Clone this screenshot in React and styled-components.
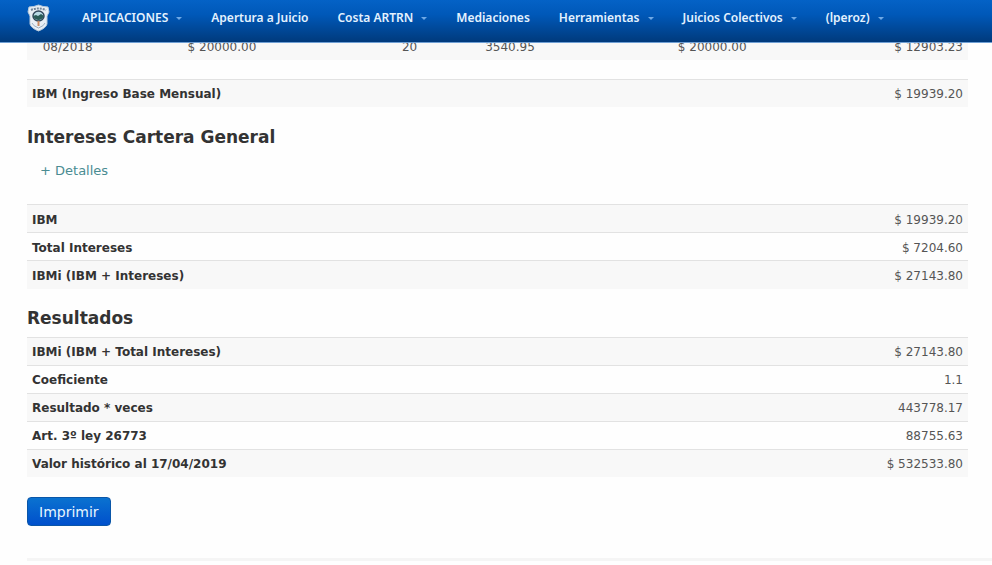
import React from "react";
import styled, { createGlobalStyle } from "styled-components";

const GlobalStyle = createGlobalStyle`
  * { box-sizing: border-box; }
  body {
    margin: 0;
    background: #fefefe;
    color: #555;
    font-family: "DejaVu Sans", Verdana, sans-serif;
    font-size: 12px;
    line-height: 18px;
  }
`;

const NavBar = styled.header`
  position: fixed;
  top: 0;
  left: 0;
  right: 0;
  z-index: 10;
  display: flex;
  align-items: center;
  height: 43px;
  padding: 0 27px 6px;
  background: linear-gradient(to bottom, #0462c6 0%, #0058b8 35%, #003a7c 100%);
  border-bottom: 1px solid #6f9fd4;
`;

const Brand = styled.a`
  display: flex;
  margin-right: 18px;
`;

const NavList = styled.ul`
  display: flex;
  gap: 1px;
  margin: 0;
  padding: 0;
  list-style: none;
`;

const NavLink = styled.a`
  display: flex;
  align-items: center;
  gap: 8px;
  padding: 0 14px;
  color: #e4f2ff;
  font-family: "Noto Sans", Tahoma, sans-serif;
  font-size: 12px;
  font-weight: 600;
  white-space: nowrap;
  text-decoration: none;
`;

const Caret = styled.span`
  border: 3px solid transparent;
  border-top-color: #6fa9e6;
  border-bottom-width: 0;
`;

const Main = styled.main`
  padding: 31px 24px 0 27px;
`;

const Table = styled.table`
  width: 100%;
  margin: 0 0 ${(p) => p.$gap}px;
  border-collapse: collapse;
  table-layout: fixed;
`;

const Row = styled.tr`
  border-top: 1px solid #e2e2e2;
  &:nth-child(odd) { background: #f8f8f8; }
`;

const Cell = styled.td`
  height: 28px;
  padding: 5px 5px 3px;
  text-align: right;
`;

const Label = styled.th`
  height: 28px;
  padding: 5px 5px 3px;
  color: #333;
  font-weight: bold;
  text-align: left;
`;

const Col = styled.col`
  width: ${(p) => p.$width};
`;

const Title = styled.h2`
  margin: 0 0 6px;
  color: #333;
  font-size: 17px;
  line-height: 26px;
`;

const Details = styled.a`
  display: block;
  width: max-content;
  margin: 11px 0 23px 13px;
  color: #4a8c92;
  font-size: 13px;
  line-height: 20px;
  text-decoration: none;
`;

const PrintButton = styled.button`
  display: block;
  height: 29px;
  padding: 0 11px;
  border: 1px solid #0a56a8;
  border-radius: 4px;
  background: linear-gradient(to bottom, #0a72d0, #0050cc);
  color: #e8f6ff;
  font-family: inherit;
  font-size: 14px;
  line-height: 18px;
`;

const Divider = styled.hr`
  height: 3px;
  margin: 32px -24px 0 0;
  border: 0;
  background: #f5f5f5;
`;

const menu = [
  ["APLICACIONES", true],
  ["Apertura a Juicio", false],
  ["Costa ARTRN", true],
  ["Mediaciones", false],
  ["Herramientas", true],
  ["Juicios Colectivos", true],
  ["(lperoz)", true],
];

const salary = ["08/2018", "$ 20000.00", "20", "3540.95", "$ 20000.00", "$ 12903.23"];
const salaryColumns = ["7.5%", "17.4%", "17.1%", "12.5%", "22.5%", "23%"];

const base = [["IBM (Ingreso Base Mensual)", "$ 19939.20"]];

const interests = [
  ["IBM", "$ 19939.20"],
  ["Total Intereses", "$ 7204.60"],
  ["IBMi (IBM + Intereses)", "$ 27143.80"],
];

const results = [
  ["IBMi (IBM + Total Intereses)", "$ 27143.80"],
  ["Coeficiente", "1.1"],
  ["Resultado * veces", "443778.17"],
  ["Art. 3º ley 26773", "88755.63"],
  ["Valor histórico al 17/04/2019", "$ 532533.80"],
];

function Crest() {
  return (
    <svg width="23" height="28" viewBox="0 0 23 28" aria-hidden="true">
      <path d="M2 3Q7 3 11.5 1Q16 3 21 3L22 8L20 12V20Q19 24 11.5 27Q4 24 3 20V12L1 8Z" fill="#e9eff5" stroke="#b9cbdc" />
      <path d="M4 6Q11 3 19 6" fill="none" stroke="#75879a" strokeWidth="2" strokeDasharray="2 1" />
      <ellipse cx="11.5" cy="12" rx="5.5" ry="5" fill="#b9dae5" stroke="#33485b" strokeWidth="1.5" />
      <path d="M6 12L9 11L11 12L14 10L17 12Q15 16 11.5 16Q8 16 6 12Z" fill="#2b5c58" />
      <path d="M11.5 17V22" stroke="#c98a62" strokeWidth="2" />
      <path d="M5 19Q6 22 11.5 24Q17 22 18 19" fill="none" stroke="#9fb0c0" strokeWidth="1" />
    </svg>
  );
}

function Summary({ rows, gap }) {
  return (
    <Table $gap={gap}>
      <tbody>
        {rows.map(([label, value]) => (
          <Row key={label}>
            <Label scope="row">{label}</Label>
            <Cell>{value}</Cell>
          </Row>
        ))}
      </tbody>
    </Table>
  );
}

export default function App() {
  return (
    <>
      <GlobalStyle />
      <NavBar>
        <Brand href="#" aria-label="Inicio"><Crest /></Brand>
        <nav>
          <NavList>
            {menu.map(([text, hasMenu]) => (
              <li key={text}>
                <NavLink href="#">{text}{hasMenu && <Caret />}</NavLink>
              </li>
            ))}
          </NavList>
        </nav>
      </NavBar>
      <Main>
        <Table $gap={19}>
          <colgroup>
            {salaryColumns.map((width, i) => <Col key={i} $width={width} />)}
          </colgroup>
          <tbody>
            <Row>{salary.map((value, i) => <Cell key={i}>{value}</Cell>)}</Row>
          </tbody>
        </Table>
        <Summary rows={base} gap={17} />
        <Title>Intereses Cartera General</Title>
        <Details href="#">+ Detalles</Details>
        <Summary rows={interests} gap={16} />
        <Title>Resultados</Title>
        <Summary rows={results} gap={20} />
        <PrintButton type="button">Imprimir</PrintButton>
        <Divider />
      </Main>
    </>
  );
}
